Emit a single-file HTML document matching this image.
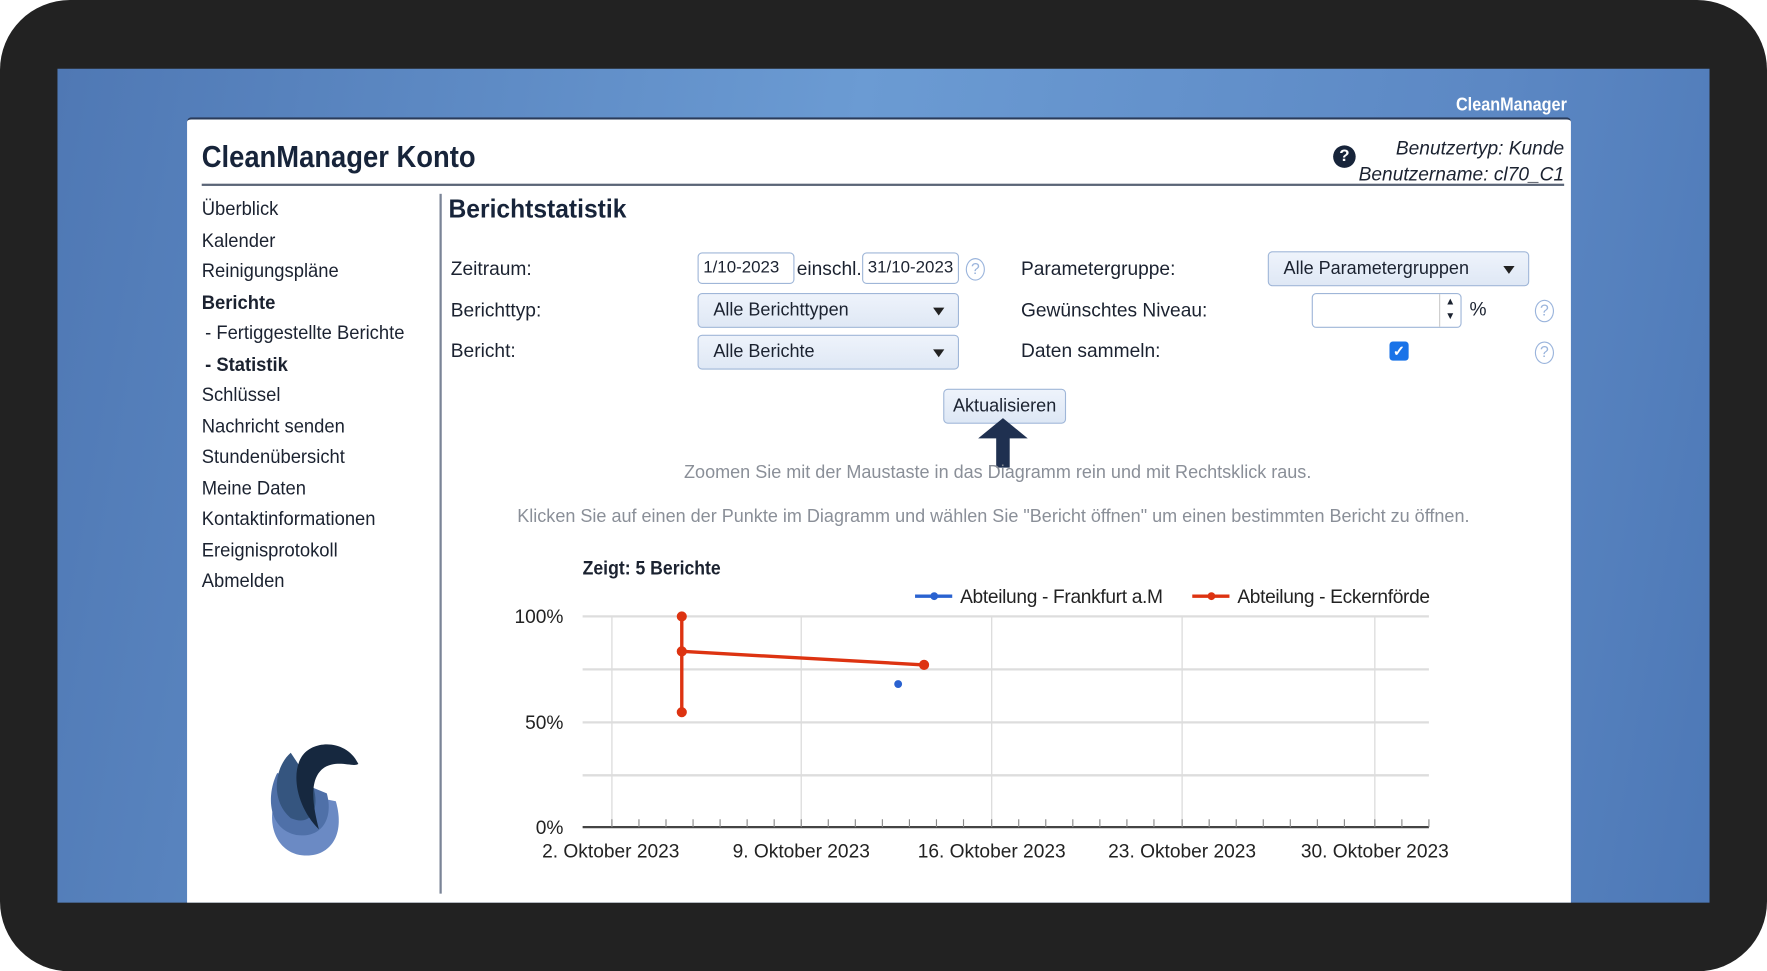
<!DOCTYPE html>
<html><head><meta charset="utf-8"><style>
*{margin:0;padding:0;box-sizing:border-box}
html,body{width:1767px;height:971px;overflow:hidden;background:#fff}
#w{position:absolute;left:0;top:0;width:1568px;height:862px;transform:scale(1.12691);transform-origin:0 0;font-family:"Liberation Sans",sans-serif;color:#1b2230}
#frame{position:absolute;left:0;top:0;width:1568px;height:862px;background:#222;border-radius:62px}
.a{position:absolute;white-space:nowrap}
#bg{position:absolute;left:51px;top:61px;width:1466px;height:740px;background:linear-gradient(100deg,#4f78b4 0%,#6b9bd3 45%,#5c88c4 80%,#4d78b6 100%)}
#panel{position:absolute;left:166px;top:104px;width:1228px;height:697px;background:#fff;border-top:2px solid #2a3b5a;border-radius:4px 4px 0 0}
.nav{font-size:17px;left:179px;transform:scaleX(.96);transform-origin:0 0}
.lbl{font-size:17px}
.inp{position:absolute;border:1px solid #9fb6d8;border-radius:4px;background:#fff;font-size:15px;padding:0 4px;line-height:26px}
.sel{position:absolute;border:1px solid #9fb6d8;border-radius:4px;background:linear-gradient(#eef3fb,#dfe8f5);font-size:16px;padding-left:13px;line-height:30px}
.sel:after{content:"";position:absolute;right:12px;top:12px;border:5px solid transparent;border-top:7px solid #222;border-bottom:0}
.q{position:absolute;width:17px;height:20px;border:1.5px solid #9ab4dc;border-radius:50%;color:#9ab4dc;font-size:14px;text-align:center;line-height:17px}
.gray{font-size:16px;color:#8a8f98}
</style></head><body><div id="w">
<div id="frame"></div>
<div id="bg"></div>
<div class="a" style="left:1292px;top:85px;color:#fff;font-weight:bold;font-size:16px;transform:scaleX(.9);transform-origin:0 0">CleanManager</div>
<div id="panel"></div>
<div class="a" style="left:179px;top:124px;font-size:27px;font-weight:bold;color:#17243a;transform:scaleX(.9);transform-origin:0 0">CleanManager Konto</div>
<div class="a" style="left:1183px;top:129px;width:20px;height:20px;border-radius:50%;background:#17243a;color:#fff;font-weight:bold;font-size:15px;text-align:center;line-height:20px">?</div>
<div class="a" style="right:180px;top:120px;font-size:17px;font-style:italic;text-align:right;line-height:23px">Benutzertyp: Kunde<br>Benutzername: cl70_C1</div>
<div class="a" style="left:179px;top:163px;width:1209px;height:2px;background:#5b6577"></div>
<div class="a" style="left:390px;top:172px;width:2px;height:621px;background:#7a8497"></div>
<div class="a nav" style="top:176px">Überblick</div>
<div class="a nav" style="top:204px">Kalender</div>
<div class="a nav" style="top:231px">Reinigungspläne</div>
<div class="a nav" style="top:259px;font-weight:bold">Berichte</div>
<div class="a nav" style="top:286px;left:182px">- Fertiggestellte Berichte</div>
<div class="a nav" style="top:314px;left:182px;font-weight:bold">- Statistik</div>
<div class="a nav" style="top:341px">Schlüssel</div>
<div class="a nav" style="top:369px">Nachricht senden</div>
<div class="a nav" style="top:396px">Stundenübersicht</div>
<div class="a nav" style="top:424px">Meine Daten</div>
<div class="a nav" style="top:451px">Kontaktinformationen</div>
<div class="a nav" style="top:479px">Ereignisprotokoll</div>
<div class="a nav" style="top:506px">Abmelden</div>
<svg class="a" style="left:208px;top:626px" width="138" height="165" viewBox="0 0 138 165">
<path d="M40 75 C28 95 32 125 55 132 C80 138 100 120 90 85 Z" fill="#6b8ac4"/>
<path d="M38 60 C28 80 30 110 55 115 C78 118 88 100 82 78 Z" fill="#4f70a8"/>
<path d="M50 42 C35 55 32 85 50 100 C68 108 76 92 70 72 Z" fill="#35557f"/>
<path d="M110 52 C100 30 70 30 60 45 C50 60 55 90 75 110 C70 90 65 65 80 55 C92 48 105 55 110 52 Z" fill="#16283f"/>
</svg>
<div class="a" style="left:398px;top:172px;font-size:23px;font-weight:bold;color:#17243a;transform:scaleX(.95);transform-origin:0 0">Berichtstatistik</div>
<div class="a lbl" style="left:400px;top:229px">Zeitraum:</div>
<div class="a lbl" style="left:400px;top:266px">Berichttyp:</div>
<div class="a lbl" style="left:400px;top:302px">Bericht:</div>
<div class="inp" style="left:619px;top:224px;width:86px;height:28px">1/10-2023</div>
<div class="a lbl" style="left:707px;top:229px">einschl.</div>
<div class="inp" style="left:765px;top:224px;width:86px;height:28px">31/10-2023</div>
<div class="q" style="left:857px;top:229px">?</div>
<div class="sel" style="left:619px;top:260px;width:232px;height:31px">Alle Berichttypen</div>
<div class="sel" style="left:619px;top:297px;width:232px;height:31px">Alle Berichte</div>
<div class="a lbl" style="left:906px;top:229px">Parametergruppe:</div>
<div class="a lbl" style="left:906px;top:266px">Gewünschtes Niveau:</div>
<div class="a lbl" style="left:906px;top:302px">Daten sammeln:</div>
<div class="sel" style="left:1125px;top:223px;width:232px;height:31px">Alle Parametergruppen</div>
<div class="inp" style="left:1164px;top:260px;width:133px;height:31px"></div>
<div class="a" style="left:1277px;top:261px;width:19px;height:29px;border-left:1px solid #ccc;font-size:9px;text-align:center;line-height:13px">▲<br>▼</div>
<div class="a lbl" style="left:1304px;top:265px">%</div>
<div class="a" style="left:1233px;top:303px;width:17px;height:17px;background:#1a73e8;border-radius:3px;color:#fff;font-size:13px;text-align:center;line-height:17px;font-weight:bold">✓</div>
<div class="q" style="left:1362px;top:266px">?</div>
<div class="q" style="left:1362px;top:303px">?</div>
<div class="a" style="left:837px;top:345px;width:109px;height:31px;border:1px solid #9fb6d8;border-radius:4px;background:linear-gradient(#eef3fb,#dde7f5);font-size:16px;text-align:center;line-height:29px">Aktualisieren</div>
<svg class="a" style="left:866px;top:369px" width="48" height="48"><path d="M24 2 L46 20 L30 20 L30 46 L18 46 L18 20 L2 20 Z" fill="#1f3050"/></svg>
<div class="a gray" style="left:607px;top:411px">Zoomen Sie mit der Maustaste in das Diagramm rein und mit Rechtsklick raus.</div>
<div class="a gray" style="left:459px;top:450px">Klicken Sie auf einen der Punkte im Diagramm und wählen Sie "Bericht öffnen" um einen bestimmten Bericht zu öffnen.</div>
<div class="a" style="left:517px;top:495px;font-size:17px;font-weight:bold;transform:scaleX(.92);transform-origin:0 0">Zeigt: 5 Berichte</div>
<svg class="a" style="left:440px;top:515px" width="860" height="260" font-family="Liberation Sans, sans-serif" font-size="17" fill="#222">
<g stroke="#ddd" stroke-width="1.2">
<line x1="77" y1="32" x2="828" y2="32" stroke-width="2"/><line x1="77" y1="79" x2="828" y2="79" stroke-width="2"/><line x1="77" y1="126" x2="828" y2="126" stroke-width="2"/><line x1="77" y1="173" x2="828" y2="173" stroke-width="2"/>
<line x1="103" y1="32" x2="103" y2="219"/><line x1="271" y1="32" x2="271" y2="219"/><line x1="440" y1="32" x2="440" y2="219"/><line x1="609" y1="32" x2="609" y2="219"/><line x1="780" y1="32" x2="780" y2="219"/>
</g>
<line x1="77" y1="219" x2="828" y2="219" stroke="#444" stroke-width="2"/>
<g stroke="#888"><path d="M103 212v7M127 212v7M151 212v7M175 212v7M199 212v7M223 212v7M247 212v7M271 212v7M295 212v7M319 212v7M343 212v7M367 212v7M391 212v7M415 212v7M440 212v7M464 212v7M488 212v7M512 212v7M536 212v7M560 212v7M584 212v7M609 212v7M633 212v7M657 212v7M681 212v7M705 212v7M729 212v7M753 212v7M780 212v7M804 212v7M828 212v7"/></g>
<text x="60" y="38" text-anchor="end">100%</text><text x="60" y="132" text-anchor="end">50%</text><text x="60" y="225" text-anchor="end">0%</text>
<text x="102" y="246" text-anchor="middle">2. Oktober 2023</text><text x="271" y="246" text-anchor="middle">9. Oktober 2023</text><text x="440" y="246" text-anchor="middle">16. Oktober 2023</text><text x="609" y="246" text-anchor="middle">23. Oktober 2023</text><text x="780" y="246" text-anchor="middle">30. Oktober 2023</text>
<line x1="372" y1="14" x2="405" y2="14" stroke="#2a62d0" stroke-width="3"/><circle cx="389" cy="14" r="3.5" fill="#2a62d0"/><text x="412" y="20" textLength="180">Abteilung - Frankfurt a.M</text>
<line x1="618" y1="14" x2="651" y2="14" stroke="#dd3311" stroke-width="3"/><circle cx="635" cy="14" r="3.5" fill="#dd3311"/><text x="658" y="20" textLength="171">Abteilung - Eckernförde</text>
<g stroke="#dd3311" stroke-width="3" fill="#dd3311"><line x1="165" y1="32" x2="165" y2="117"/><line x1="165" y1="63" x2="380" y2="75"/>
<circle cx="165" cy="32" r="3"/><circle cx="165" cy="63" r="3"/><circle cx="165" cy="117" r="3"/><circle cx="380" cy="75" r="3"/></g>
<circle cx="357" cy="92" r="3.5" fill="#2a62d0"/>
</svg>
</div></body></html>
